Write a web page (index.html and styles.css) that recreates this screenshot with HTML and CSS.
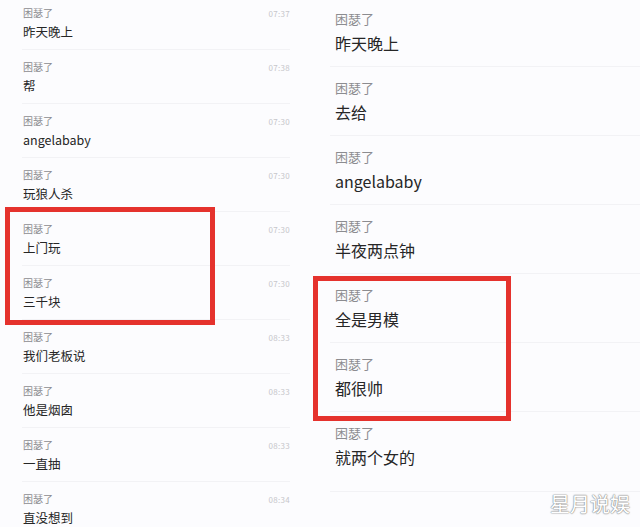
FILE: index.html
```html
<!DOCTYPE html>
<html lang="zh-CN">
<head>
<meta charset="utf-8">
<title>聊天记录</title>
<link rel="stylesheet" href="styles.css">
</head>
<body>
	<div class="page">
		<div class="panel panel_left">
			<ul class="chat">
				<li><div class="head"><span class="name">困瑟了</span><span class="time">07:37</span></div><div class="msg">昨天晚上</div></li>
				<li><div class="head"><span class="name">困瑟了</span><span class="time">07:38</span></div><div class="msg">帮</div></li>
				<li><div class="head"><span class="name">困瑟了</span><span class="time">07:30</span></div><div class="msg">angelababy</div></li>
				<li><div class="head"><span class="name">困瑟了</span><span class="time">07:30</span></div><div class="msg">玩狼人杀</div></li>
				<li><div class="head"><span class="name">困瑟了</span><span class="time">07:30</span></div><div class="msg">上门玩</div></li>
				<li><div class="head"><span class="name">困瑟了</span><span class="time">07:30</span></div><div class="msg">三千块</div></li>
				<li><div class="head"><span class="name">困瑟了</span><span class="time">08:33</span></div><div class="msg">我们老板说</div></li>
				<li><div class="head"><span class="name">困瑟了</span><span class="time">08:33</span></div><div class="msg">他是烟囱</div></li>
				<li><div class="head"><span class="name">困瑟了</span><span class="time">08:33</span></div><div class="msg">一直抽</div></li>
				<li><div class="head"><span class="name">困瑟了</span><span class="time">08:34</span></div><div class="msg">直没想到</div></li>
			</ul>
			<div class="mark mark_left"></div>
		</div>
		<div class="panel panel_right">
			<ul class="chat">
				<li><div class="name">困瑟了</div><div class="msg">昨天晚上</div></li>
				<li><div class="name">困瑟了</div><div class="msg">去给</div></li>
				<li><div class="name">困瑟了</div><div class="msg">angelababy</div></li>
				<li><div class="name">困瑟了</div><div class="msg">半夜两点钟</div></li>
				<li><div class="name">困瑟了</div><div class="msg">全是男模</div></li>
				<li><div class="name">困瑟了</div><div class="msg">都很帅</div></li>
				<li class="last"><div class="name">困瑟了</div><div class="msg">就两个女的</div></li>
			</ul>
			<div class="mark mark_right"></div>
			<div class="watermark">星月说娱</div>
		</div>
	</div>
</body>
</html>
```

FILE: styles.css
```css
html {
	background: #fcfcfe;
}
body {
	margin: 0;
	font-family: "Noto Sans CJK SC", "Noto Sans", sans-serif;
	color: #222;
}

.page {
	display: flex;
	width: 640px;
	height: 527px;
	overflow: hidden;
	position: relative;
}
.panel {
	position: relative;
}
.panel_left {
	width: 300px;
}
.panel_right {
	flex: 1;
}

ul.chat {
	list-style-type: none;
	margin: 0;
	padding: 0;
}

/* left screenshot: small rows with times */
.panel_left ul.chat {
	margin: -4px 10px 0 22px;
}
.panel_left ul.chat li {
	height: 53px;
	padding: 0 0 0 1px;
	border-bottom: 1px solid #f2f2f5;
}
.panel_left .head {
	display: flex;
	justify-content: space-between;
	align-items: center;
	padding-top: 10px;
	height: 14px;
}
.panel_left .name {
	font-size: 10px;
	color: #8c8c90;
	line-height: 14px;
}
.panel_left .time {
	font-size: 8px;
	color: #c6c6ca;
	letter-spacing: 0.3px;
}
.panel_left .msg {
	margin-top: 3px;
	font-size: 12.5px;
	line-height: 18px;
	color: #262626;
}

/* right screenshot: bigger rows */
.panel_right ul.chat {
	margin: -2px 0 0 30px;
}
.panel_right ul.chat li {
	height: 68px;
	padding-left: 5px;
	border-bottom: 1px solid #f2f2f5;
}
.panel_right ul.chat li.last {
	height: 79px;
}
.panel_right .name {
	padding-top: 12px;
	font-size: 13px;
	line-height: 18px;
	color: #8c8c90;
}
.panel_right .msg {
	margin-top: 4px;
	font-size: 16px;
	line-height: 22px;
	color: #262626;
}

/* red annotation boxes drawn over the list */
.mark {
	position: absolute;
	border: 5px solid #e5322d;
}
.mark_left {
	left: 5px;
	top: 207px;
	width: 200px;
	height: 108px;
}
.mark_right {
	left: 13px;
	top: 276px;
	width: 188px;
	height: 135px;
}

.watermark {
	position: absolute;
	right: 10px;
	bottom: 12px;
	font-size: 20px;
	line-height: 22px;
	color: #fff;
	text-shadow: 0 0 1px #888, 0 0 1px #888, 0 0 2px #aaa;
}
```
